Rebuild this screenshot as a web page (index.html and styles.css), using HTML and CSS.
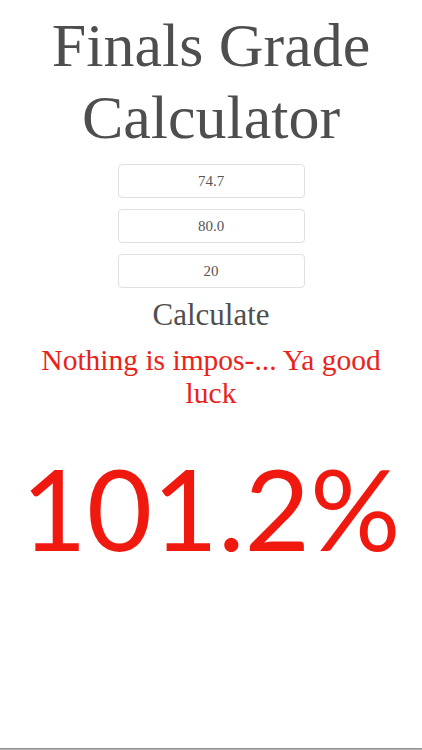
FILE: index.html
```html
<!DOCTYPE html>
<html>
<head>
<meta charset="utf-8">
<link rel="stylesheet" href="styles.css">
</head>
<body>
<div class="page">
  <h1 class="title">Finals Grade Calculator</h1>
  <div class="fields">
    <div class="field">74.7</div>
    <div class="field">80.0</div>
    <div class="field">20</div>
  </div>
  <div class="calc">Calculate</div>
  <div class="message">Nothing is impos-... Ya good luck</div>
  <div class="result">101.2%</div>
</div>
<div class="bottom"></div>
</body>
</html>
```
FILE: styles.css
```css
html, body {
  margin: 0;
  padding: 0;
  background: #fff;
}
body {
  width: 422px;
  height: 750px;
  position: relative;
  overflow: hidden;
  font-family: "Liberation Serif", "Times New Roman", serif;
}
.page {
  display: flex;
  flex-direction: column;
  align-items: center;
  padding-top: 9px;
}
.title {
  margin: 0;
  width: 360px;
  text-align: center;
  font-weight: normal;
  font-size: 62px;
  line-height: 72px;
  color: #4e4e4e;
}
.fields {
  display: flex;
  flex-direction: column;
  gap: 11px;
  margin-top: 11px;
}
.field {
  width: 185px;
  height: 32px;
  border: 1px solid #e0e0e0;
  border-radius: 4px;
  box-sizing: content-box;
  display: flex;
  align-items: center;
  justify-content: center;
  font-size: 15px;
  color: #555;
}
.calc {
  margin-top: 9px;
  font-size: 31px;
  line-height: 36px;
  color: #4e4e4e;
}
.message {
  margin-top: 11px;
  width: 380px;
  text-align: center;
  font-size: 29.5px;
  line-height: 33px;
  color: #e8231a;
}
.result {
  margin-top: 34px;
  font-family: "Lato", "Liberation Sans", sans-serif;
  font-weight: 400;
  font-size: 113px;
  line-height: 126px;
  color: #f0190f;
}
.bottom {
  position: absolute;
  left: 0;
  right: 0;
  bottom: 0;
  height: 2px;
  background: linear-gradient(#888, #bbb);
}
```
